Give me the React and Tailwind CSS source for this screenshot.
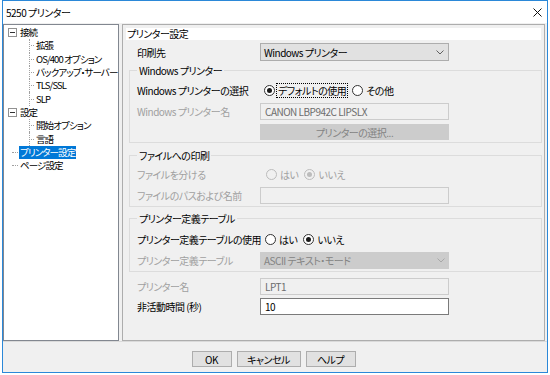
import React from 'react';

const font = "[font-family:'Noto_Sans_CJK_JP','Noto_Sans',sans-serif] [font-feature-settings:'palt']";

function Radio({ checked, disabled }) {
  return (
    <span
      className={`flex h-[11px] w-[11px] shrink-0 items-center justify-center rounded-full border ${
        disabled ? 'border-[#bcbcbc] bg-[#f0f0f0]' : 'border-[#333333] bg-white'
      }`}
    >
      {checked && <span className={`h-[5px] w-[5px] rounded-full ${disabled ? 'bg-[#bcbcbc]' : 'bg-[#1a1a1a]'}`} />}
    </span>
  );
}

function Option({ checked, disabled, focused, children }) {
  return (
    <label className="flex items-center gap-[2px]">
      <Radio checked={checked} disabled={disabled} />
      <span
        className={`whitespace-nowrap px-[1px] leading-[13px] ${disabled ? 'text-[#a0a0a0]' : 'text-black'} ${
          focused ? 'outline outline-1 outline-dotted outline-black' : ''
        }`}
      >
        {children}
      </span>
    </label>
  );
}

function Row({ label, disabled, className = '', children }) {
  return (
    <div className={`flex h-[17px] items-center ${className}`}>
      <span className={`w-[123px] shrink-0 whitespace-nowrap ${disabled ? 'text-[#a0a0a0]' : 'text-black'}`}>{label}</span>
      {children}
    </div>
  );
}

function Chevron({ color }) {
  return (
    <svg width="8" height="5" viewBox="0 0 8 5">
      <path d="M0.5 0.5 L4 4 L7.5 0.5" fill="none" stroke={color} strokeWidth="1" />
    </svg>
  );
}

function Field({ value, disabled }) {
  return (
    <div
      className={`flex h-[17px] w-[189px] items-center border pl-[4px] ${
        disabled ? 'border-[#cccccc] bg-[#f0f0f0] text-[#6d6d6d]' : 'border-[#7a7a7a] bg-white text-black'
      }`}
    >
      {value}
    </div>
  );
}

function Group({ title, className = '', children }) {
  return (
    <fieldset className={`ml-[6px] mr-[2px] border border-[#dcdcdc] pl-[7px] pb-[2px] ${className}`}>
      <legend className="px-[2px] leading-[13px]">{title}</legend>
      {children}
    </fieldset>
  );
}

const treeItems = [
  { label: '接続', level: 0, box: true },
  { label: '拡張', level: 1 },
  { label: 'OS/400 オプション', level: 1 },
  { label: 'バックアップ・サーバー', level: 1 },
  { label: 'TLS/SSL', level: 1 },
  { label: 'SLP', level: 1 },
  { label: '設定', level: 0, box: true },
  { label: '開始オプション', level: 1 },
  { label: '言語', level: 1 },
  { label: 'プリンター設定', level: 0, selected: true },
  { label: 'ページ設定', level: 0 },
];

function Tree() {
  return (
    <div className="h-[317px] w-[116px] shrink-0 overflow-hidden border border-[#828790] bg-white pt-[1px] text-[9.5px] tracking-[-0.9px]">
      {treeItems.map((item) => (
        <div key={item.label} className="flex h-[13.3px] items-center">
          {item.level === 0 ? (
            <div className="flex w-[15px] shrink-0 items-center justify-end">
              {item.box ? (
                <span className="mr-[2px] flex h-[9px] w-[9px] items-center justify-center border border-[#919191] bg-white">
                  <span className="h-[1px] w-[5px] bg-[#333333]" />
                </span>
              ) : (
                <span className="mr-[1px] w-[6px] border-t border-dotted border-[#a0a0a0]" />
              )}
            </div>
          ) : (
            <div className="flex h-[13.3px] w-[31px] shrink-0 items-center justify-end">
              <span className="h-full border-l border-dotted border-[#a0a0a0]" />
              <span className="ml-[1px] mr-[1px] w-[3px] border-t border-dotted border-[#a0a0a0]" />
            </div>
          )}
          <span
            className={`inline-block h-[13px] whitespace-nowrap px-[1px] leading-[13px] ${
              item.selected ? 'bg-[#0078d7] text-white' : 'text-black'
            }`}
          >
            {item.label}
          </span>
        </div>
      ))}
    </div>
  );
}

export default function App() {
  return (
    <div className={`h-[375px] w-[550px] bg-white text-[10px] tracking-[-0.5px] ${font}`}>
      <div className="ml-[2px] flex h-[373px] w-[546px] flex-col border border-[#2b88d8]">
        <div className="flex h-[22px] shrink-0 items-center justify-between bg-white pl-[3px] pr-[5px]">
          <span className="leading-[13px]">5250 プリンター</span>
          <svg width="9" height="9" viewBox="0 0 9 9">
            <path d="M0.5 0.5 L8.5 8.5 M8.5 0.5 L0.5 8.5" stroke="#111" strokeWidth="1" />
          </svg>
        </div>
        <div className="flex flex-1 flex-col bg-[#f0f0f0]">
          <div className="flex gap-[3px] pt-[1px] pr-[2px]">
            <Tree />
            <div className="flex h-[317px] flex-1 flex-col border border-[#adadad]">
              <div className="mx-[3px] mt-[3px] h-[12px] bg-white pl-[1px] leading-[12px]">プリンター設定</div>

              <div className="mt-[3px] flex h-[18px] items-center pl-[14px]">
                <span className="w-[123px] shrink-0">印刷先</span>
                <div className="flex h-[18px] w-[189px] items-center justify-between border border-[#adadad] bg-[#e1e1e1] pl-[3px] pr-[4px]">
                  <span>Windows プリンター</span>
                  <Chevron color="#606060" />
                </div>
              </div>

              <Group title="Windows プリンター" className="mt-[3px]">
                <Row label="Windows プリンターの選択" className="mt-[5px]">
                  <div className="flex items-center gap-[5px] pl-[4px]">
                    <Option checked focused>デフォルトの使用</Option>
                    <Option>その他</Option>
                  </div>
                </Row>
                <Row label="Windows プリンター名" disabled className="mt-[4px]">
                  <Field value="CANON LBP942C LIPSLX" disabled />
                </Row>
                <div className="mt-[4px] flex h-[16px] items-center">
                  <span className="w-[123px] shrink-0" />
                  <div className="flex h-[16px] w-[189px] items-center justify-center bg-[#cccccc] text-[#838383]">
                    プリンターの選択...
                  </div>
                </div>
              </Group>

              <Group title="ファイルへの印刷" className="mt-[6px]">
                <Row label="ファイルを分ける" disabled className="mt-[4px]">
                  <div className="flex items-center gap-[5px] pl-[6px]">
                    <Option disabled>はい</Option>
                    <Option disabled checked>いいえ</Option>
                  </div>
                </Row>
                <Row label="ファイルのパスおよび名前" disabled className="mt-[4px]">
                  <Field value="" disabled />
                </Row>
              </Group>

              <Group title="プリンター定義テーブル" className="mt-[5px]">
                <Row label="プリンター定義テーブルの使用" className="mt-[6px]">
                  <div className="flex items-center gap-[5px] pl-[5px]">
                    <Option>はい</Option>
                    <Option checked>いいえ</Option>
                  </div>
                </Row>
                <Row label="プリンター定義テーブル" disabled className="mt-[4px]">
                  <div className="flex h-[17px] w-[189px] items-center justify-between bg-[#cccccc] pl-[4px] pr-[4px] text-[#838383]">
                    <span>ASCII テキスト・モード</span>
                    <Chevron color="#a8a8a8" />
                  </div>
                </Row>
              </Group>

              <Row label="プリンター名" disabled className="mt-[6px] pl-[14px]">
                <Field value="LPT1" disabled />
              </Row>
              <Row label="非活動時間 (秒)" className="mt-[3px] pl-[14px]">
                <Field value="10" />
              </Row>
            </div>
          </div>
          <div className="flex justify-center gap-[5px] border-t border-[#dadada] pt-[9px] pr-[3px]">
            <button className="h-[16px] w-[40px] border border-[#adadad] bg-[#e1e1e1] leading-[13px]">OK</button>
            <button className="h-[16px] w-[64px] border border-[#adadad] bg-[#e1e1e1] leading-[13px]">キャンセル</button>
            <button className="h-[16px] w-[50px] border border-[#adadad] bg-[#e1e1e1] leading-[13px]">ヘルプ</button>
          </div>
        </div>
      </div>
    </div>
  );
}
